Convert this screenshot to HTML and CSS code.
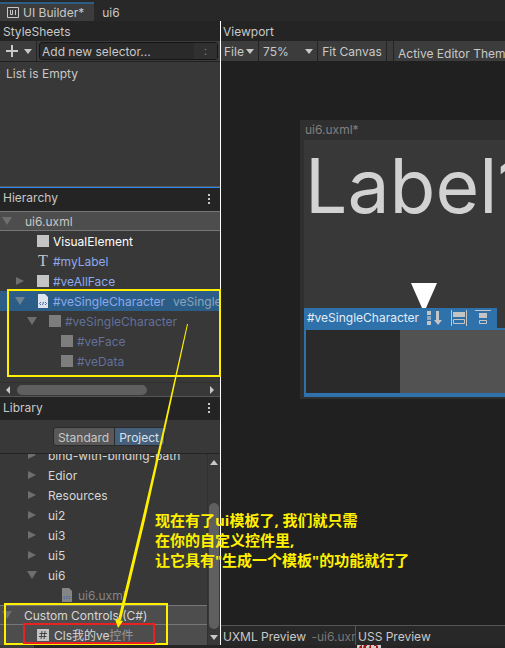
FILE: index.html
```html
<!DOCTYPE html>
<html lang="en">
<head>
<meta charset="utf-8">
<title>UI Builder</title>
<link rel="stylesheet" href="styles.css">
</head>
<body>
<svg class="defs" aria-hidden="true">
  <symbol id="down" viewBox="0 0 10 8"><path d="M0 0h10L5 8z"/></symbol>
  <symbol id="caret" viewBox="0 0 8 5"><path d="M0 0h8L4 5z"/></symbol>
  <symbol id="right" viewBox="0 0 8 8"><path d="M0 0v8l8-4z"/></symbol>
  <symbol id="uxml" viewBox="0 0 10 14"><path d="M0 0h7l3 3v11H0z"/><path class="code" d="M3 8L1.500 9.500 3 11M7 8l1.500 1.500L7 11M5.500 8l-1 3"/></symbol>
  <symbol id="dots" viewBox="0 0 4 12"><path d="M1 0h2v2H1zM1 4h2v2H1zM1 8h2v2H1z"/></symbol>
</svg>
<nav class="tabs">
  <button class="tab active"><svg class="logo" viewBox="0 0 12 11"><path d="M.5.5h11v10H.5zM3.500 3v4.500h2V3M8.500 3v5"/></svg>UI Builder*</button>
  <button class="tab">ui6</button>
</nav>
<main class="builder">
  <aside class="side">
    <section class="sheets">
      <h2 class="title">StyleSheets</h2>
      <div class="bar">
        <button class="add" aria-label="Add stylesheet"><svg class="plus" viewBox="0 0 12 12"><path d="M5 0h2v5h5v2H7v5H5V7H0V5h5z"/></svg><svg class="caret"><use href="#caret"/></svg></button>
        <div class="selector"><input type="text" aria-label="Add new selector" placeholder="Add new selector..."><button class="more" aria-label="Pseudo states">:</button></div>
      </div>
      <p class="empty">List is Empty</p>
    </section>
    <section class="hierarchy">
      <div class="title tall"><h2>Hierarchy</h2><button class="menu" aria-label="Hierarchy menu"><svg><use href="#dots"/></svg></button></div>
      <ul class="tree">
        <li class="row root"><svg class="arrow"><use href="#down"/></svg><span>ui6.uxml</span></li>
        <li class="row d1 plain"><i class="box"></i><span>VisualElement</span></li>
        <li class="row d1"><i class="tee">T</i><span>#myLabel</span></li>
        <li class="row d1 open"><svg class="arrow"><use href="#right"/></svg><i class="box"></i><span>#veAllFace</span></li>
        <li class="row d1 open selected"><svg class="arrow"><use href="#down"/></svg><svg class="doc"><use href="#uxml"/></svg><span>#veSingleCharacter</span><span class="type">veSingleCharacter</span></li>
        <li class="row d2 open dim"><svg class="arrow"><use href="#down"/></svg><i class="box"></i><span>#veSingleCharacter</span></li>
        <li class="row d3 dim"><i class="box"></i><span>#veFace</span></li>
        <li class="row d3 dim"><i class="box"></i><span>#veData</span></li>
      </ul>
      <div class="hscroll"><svg viewBox="0 0 4 8"><path d="M4 0v8L0 4z"/></svg><div class="track"><div class="thumb"></div></div><svg viewBox="0 0 4 8"><path d="M0 0v8l4-4z"/></svg></div>
    </section>
    <section class="library">
      <div class="title tall"><h2>Library</h2><button class="menu" aria-label="Library menu"><svg><use href="#dots"/></svg></button></div>
      <div class="modes"><button>Standard</button><button class="on">Project</button></div>
      <div class="files">
        <ul class="list">
          <li class="row"><svg class="arrow"><use href="#right"/></svg><span>bind-with-binding-path</span></li>
          <li class="row"><svg class="arrow"><use href="#right"/></svg><span>Edior</span></li>
          <li class="row"><svg class="arrow"><use href="#right"/></svg><span>Resources</span></li>
          <li class="row"><svg class="arrow"><use href="#right"/></svg><span>ui2</span></li>
          <li class="row"><svg class="arrow"><use href="#right"/></svg><span>ui3</span></li>
          <li class="row"><svg class="arrow"><use href="#right"/></svg><span>ui5</span></li>
          <li class="row"><svg class="arrow"><use href="#down"/></svg><span>ui6</span></li>
          <li class="row leaf"><svg class="doc"><use href="#uxml"/></svg><span>ui6.uxml</span></li>
          <li class="row group"><svg class="arrow"><use href="#down"/></svg><span>Custom Controls (C#)</span></li>
          <li class="row control"><svg class="hash" viewBox="0 0 12 12"><path d="M0 0h12v12H0z"/><path class="mark" d="M5 2L4 10M8 2L7 10M2.500 4.500h7.500M2 7.500h7.500"/></svg><span>Cls我的ve<span class="faded">控件</span></span></li>
        </ul>
        <div class="vscroll"><svg viewBox="0 0 8 5"><path d="M0 5h8L4 0z"/></svg><div class="vtrack"><div class="vthumb"></div></div><svg viewBox="0 0 8 5"><path d="M0 0h8L4 5z"/></svg></div>
      </div>
    </section>
  </aside>
  <section class="viewport">
    <h2 class="title">Viewport</h2>
    <div class="bar tools">
      <button class="file">File<svg class="caret"><use href="#caret"/></svg></button>
      <div class="zoom"><select aria-label="Zoom"><option>75%</option></select><svg class="caret"><use href="#caret"/></svg></div>
      <button class="fit">Fit Canvas</button>
      <span class="gap"></span>
      <button class="theme">Active Editor Theme</button>
    </div>
    <div class="stage">
      <div class="canvas">
        <div class="name">ui6.uxml*</div>
        <div class="document">
          <div class="big">Label1</div>
          <svg class="pointer" viewBox="0 0 26 25"><path d="M0 0h26L15 25h-4z"/></svg>
          <div class="handle"><span>#veSingleCharacter</span>
            <svg viewBox="0 -1 16 16"><path d="M0 0h4v4H0zM0 10h4v4H0zM9 0h3v9h3l-4 5-4-5h2z"/><path class="soft" d="M0 5h4v4H0z"/></svg>
            <svg viewBox="0 0 16 16"><path d="M0 0h1v16H0zM15 0h1v16h-1zM2 2h12v5H2z"/><path class="line" d="M2.500 9.500h11v4h-11z"/></svg>
            <svg viewBox="0 0 16 16"><path d="M0 0h16v1H0zM4 3h8v5H4z"/><path class="line" d="M4.500 10.500h7v3h-7z"/></svg>
          </div>
          <div class="element"><div class="face"></div><div class="data"></div></div>
        </div>
      </div>
    </div>
    <div class="previews"><h2 class="xml">UXML Preview <span>-ui6.uxml</span></h2><h2>USS Preview</h2></div>
  </section>
</main>
<footer class="under"><div class="patch"></div><svg class="red" viewBox="0 0 24 3"><path class="paper" d="M0 0h24v3H0z"/><path d="M3 1l2-1v3H2zM7 0h3v1h-1v2H6zM13 0h1v3h-2zM17 0h2l2 1v2h-2V1h-2z"/></svg></footer>
<div class="notes">
  <div class="frame tree-frame"></div>
  <div class="frame control-frame"></div>
  <div class="frame name-frame"></div>
  <svg class="line-note" viewBox="0 0 80 310"><path d="M72 1h1L50 107 30 197 6 297H3L27 197 48 107z"/><path d="M0 296l8 2-5 7z"/></svg>
  <p class="text" lang="zh">现在有了ui模板了, 我们就只需<br>在你的自定义控件里,<br>让它具有"生成一个模板"的功能就行了</p>
</div>
</body>
</html>
```
FILE: styles.css
```css
* { box-sizing: border-box; margin: 0; padding: 0; }
body {
  position: relative;
  display: flex;
  flex-direction: column;
  height: 100vh;
  overflow: hidden;
  background: #282828;
  color: #c8c8c8;
  font: 12px/20px Inter, "Noto Sans CJK SC", sans-serif;
}
button, input, select { font: inherit; color: inherit; background: none; border: 0; border-radius: 0; outline: 0; }
button { white-space: nowrap; }
h2 { font: inherit; }
ul { list-style: none; }
svg { flex: none; fill: currentColor; }
.defs { display: none; }

.tabs { display: flex; flex: none; height: 21px; padding-top: 2px; }
.tab { display: flex; align-items: center; padding: 2px 12px 0 8px; }
.tab.active { padding: 0 10px 0 7px; border-top: 2px solid #2c5d87; background: #3c3c3c; }
.logo { width: 12px; height: 11px; margin-right: 4px; fill: none; stroke: #c8c8c8; }

.builder { display: grid; flex: 1; grid-template-columns: 221px minmax(0, 1fr); min-height: 0; }
.side { display: flex; flex-direction: column; min-height: 0; min-width: 0; border-right: 1px solid #fff; background: #383838; }
.title { height: 20px; padding-left: 3px; background: #242424; line-height: 22px; }
.title.tall { display: flex; justify-content: space-between; line-height: 20px; }
.menu { width: 22px; padding-top: 1px; }
.menu svg { display: block; width: 4px; height: 12px; margin: auto; }
.bar { display: flex; height: 21px; border-bottom: 1px solid #202020; background: #3c3c3c; }
.caret { width: 8px; height: 5px; }

.sheets { flex: none; height: 165px; }
.add { display: flex; align-items: center; gap: 6px; width: 37px; padding-left: 6px; border-right: 1px solid #242424; }
.plus { width: 12px; height: 12px; }
.selector { display: flex; flex: 1; min-width: 0; margin: 1px 2px; border: 1px solid #151515; border-radius: 3px; background: #2a2a2a; }
.selector input { flex: 1; min-width: 0; padding: 2px 0 0 2px; }
.selector input::placeholder { color: #c8c8c8; opacity: 1; }
.more { width: 23px; background: #303030; color: #777; line-height: 16px; }
.empty { padding: 2px 6px; }

.hierarchy { flex: none; border-top: 1px solid #555; }
.hierarchy .title { height: 24px; border-top: 1px solid #2a8cf0; }
.row { display: flex; align-items: center; height: 20px; white-space: nowrap; }
.row > span { padding-top: 2px; }
.tree { height: 171px; overflow: hidden; color: #8da9ee; }
.arrow { width: 10px; height: 8px; fill: #6e6e6e; }
.root { padding-left: 2px; border: solid #777; border-width: 1px 0; background: #4d4d4d; color: #c8c8c8; }
.root span { margin-left: 13px; }
.d1 { padding-left: 37px; }
.d2 { padding-left: 49px; }
.d3 { padding-left: 61px; }
.d1.open { padding-left: 15px; }
.d2.open { padding-left: 27px; }
.open .arrow { margin-right: 12px; }
.box, .tee { flex: none; width: 12px; height: 12px; margin-right: 4px; background: #c4c4c4; }
.tee { background: none; color: #c4c4c4; font: 16px/12px "Liberation Serif", serif; text-align: center; }
.plain { color: #fff; }
.selected { background: #2c5d87; }
.selected .arrow { fill: #6e8392; }
.doc { width: 10px; height: 14px; margin: 0 5px 0 1px; fill: #dce3ea; }
.code { fill: none; stroke: #4668b0; }
.type { margin-left: 8px; color: #8ba5ba; }
.dim { color: #62709a; }
.dim .box { background: #7d7d7d; }
.hscroll { display: flex; align-items: center; gap: 7px; height: 14px; padding: 0 6px; border-top: 1px solid #303030; }
.hscroll svg { width: 4px; height: 8px; }
.track { flex: 1; }
.thumb { width: 70%; height: 10px; border-radius: 5px; background: #5f5f5f; }

.library { display: flex; flex: 1; flex-direction: column; min-height: 0; }
.library .title { height: 24px; border-top: 1px solid #555; line-height: 22px; }
.modes { display: flex; flex: none; justify-content: center; height: 34px; padding: 7px 2px 7px 0; border-bottom: 1px solid #242424; }
.modes button { padding: 1px 5px 0 4px; border: 1px solid #2a2a2a; border-radius: 3px 0 0 3px; background: #585858; line-height: 18px; }
.modes .on { border-left: 0; border-radius: 0 3px 3px 0; background: #46607c; color: #d8e0e8; }
.files { display: flex; flex: 1; min-height: 0; }
.list { display: flex; flex: 1; flex-direction: column; justify-content: flex-end; min-width: 0; overflow: hidden; color: #d6d6d6; }
.list .row { flex: none; padding-left: 27px; }
.list .arrow { margin-right: 11px; }
.list .leaf { padding-left: 61px; color: #858585; }
.leaf .doc { fill: #858585; margin-right: 6px; }
.list .group { padding-left: 2px; border: solid #777; border-width: 1px 0; background: #4d4d4d; }
.list .group .arrow { margin-right: 12px; }
.list .control { padding-left: 37px; background: #4d4d4d; }
.hash { width: 12px; height: 12px; margin-right: 5px; fill: #c4c4c4; }
.mark { fill: none; stroke: #444; }
.faded { color: #999; }
.vscroll { display: flex; flex: none; flex-direction: column; align-items: center; width: 13px; padding: 6px 0 5px; border-left: 1px solid #303030; }
.vscroll svg { width: 8px; height: 5px; }
.vtrack { display: flex; flex: 1; align-items: flex-end; padding-bottom: 6px; }
.vthumb { width: 10px; height: 77%; border-radius: 5px; background: #5f5f5f; }

.viewport { display: flex; flex-direction: column; min-width: 0; min-height: 0; background: #202020; }
.viewport .title { padding-left: 2px; }
.viewport > * { flex: none; }
.tools { overflow: hidden; }
.tools > * { flex: none; border-right: 1px solid #242424; }
.file { display: flex; align-items: center; justify-content: space-between; width: 38px; padding: 1px 4px 0 3px; }
.zoom { display: flex; align-items: center; width: 59px; padding: 1px 4px 0; }
.zoom select { flex: 1; min-width: 0; appearance: none; }
.fit { width: 69px; padding-top: 1px; }
.gap { width: 7px; }
.tools .theme { padding: 3px 4px 0; border: 0; }
.viewport > .stage { flex: 1; min-height: 0; padding: 58px 0 0 79px; overflow: hidden; }
.canvas { height: 279px; padding-left: 4px; background: #2f2f2f; color: #808080; }
.name { padding-left: 1px; }
.document { display: flex; flex-direction: column; height: 257px; overflow: hidden; background: #383838; }
.big { padding-left: 1px; color: #d2d2d2; font-size: 75px; line-height: 91px; }
.pointer { width: 26px; height: 25px; margin: auto 0 0 107px; fill: #fff; }
.handle { display: flex; align-items: center; align-self: flex-start; gap: 8px; height: 20px; padding: 0 6px 0 3px; background: #2f71aa; color: #e4eef6; }
.handle svg { width: 16px; height: 16px; fill: #c4c4c4; }
.handle .soft { fill: #8eabc2; }
.handle .line { fill: none; stroke: #c4c4c4; }
.element { display: flex; height: 69px; border: solid #2f71aa; border-width: 2px 0 4px 2px; }
.face { width: 94px; background: #2a2a2a; }
.data { flex: 1; background: #525252; }
.previews { display: flex; height: 20px; border-top: 1px solid #555; background: #282828; line-height: 22px; }
.previews h2 { padding-left: 2px; overflow: hidden; white-space: nowrap; }
.previews .xml { width: 135px; border-right: 1px solid #555; }
.xml span { margin-left: 2px; color: #777; }

.under { display: flex; flex: none; justify-content: space-between; height: 3px; background: #262425; }
.patch { width: 34px; background: #3c3c3c; }
.red { width: 24px; height: 3px; margin-right: 124px; fill: #a11; }
.paper { fill: #ccc; }

.notes { position: absolute; inset: 0; pointer-events: none; }
.notes > * { position: absolute; }
.frame { border: 2px solid #fff000; }
.tree-frame { left: 7px; top: 289px; width: 214px; height: 88px; }
.control-frame { left: 4px; top: 603px; width: 164px; height: 42px; }
.name-frame { left: 23px; top: 623px; width: 132px; height: 21px; border-color: #e82222; }
.line-note { left: 115px; top: 323px; width: 80px; height: 310px; fill: #fff000; }
.text { left: 155px; top: 510px; color: #fff000; font: bold 15px/20px "Open Sans", "Noto Sans CJK SC", sans-serif; white-space: nowrap; }
```
